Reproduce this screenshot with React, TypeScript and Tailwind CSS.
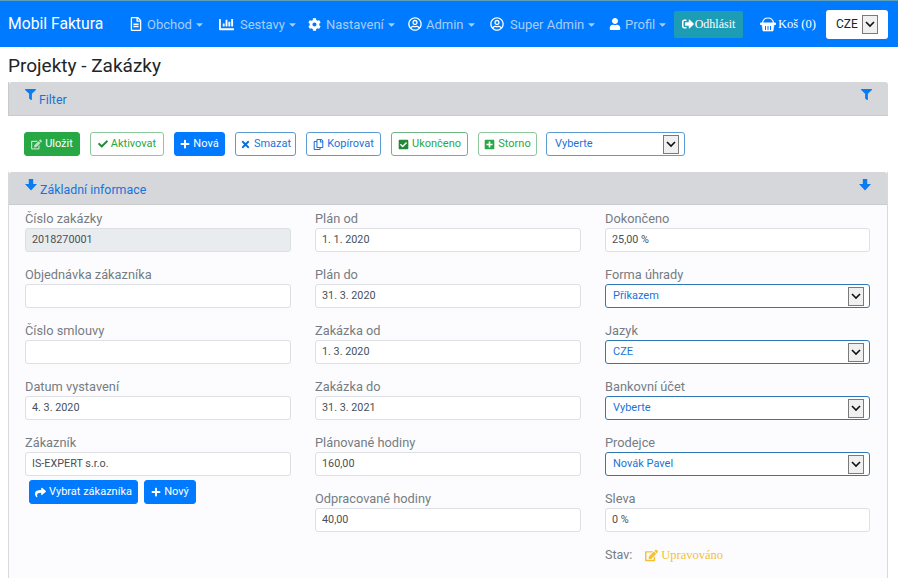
import type { ReactNode } from "react";
import {
  FaCaretDown,
  FaChartBar,
  FaCheck,
  FaCheckSquare,
  FaCog,
  FaEdit,
  FaFilter,
  FaPlus,
  FaPlusSquare,
  FaRegCopy,
  FaRegFileAlt,
  FaRegUserCircle,
  FaShare,
  FaSignOutAlt,
  FaTimes,
  FaUser,
} from "react-icons/fa";

const navItems = [
  { label: "Obchod", icon: <FaRegFileAlt className="text-[14px]" />, box: "w-[18px]", width: "w-[90px]" },
  { label: "Sestavy", icon: <FaChartBar className="text-[15px]" />, box: "w-[21px]", width: "w-[89px]" },
  { label: "Nastavení", icon: <FaCog className="text-[13px]" />, box: "w-[18px]", width: "w-[100px]" },
  { label: "Admin", icon: <FaRegUserCircle className="text-[14px]" />, box: "w-[18px]", width: "w-[82px]" },
  { label: "Super Admin", icon: <FaRegUserCircle className="text-[14px]" />, box: "w-[20px]", width: "w-[119px]" },
  { label: "Profil", icon: <FaUser className="text-[12px]" />, box: "w-[16px]", width: "w-[65px]" },
];

function SelectArrow() {
  return (
    <span className="flex h-[19px] w-[16px] items-center justify-center border border-[#7a7a7a] bg-[#f0f0f0]">
      <svg width="10" height="7" viewBox="0 0 10 7">
        <path d="M1 1l4 4 4-4" fill="none" stroke="#111" strokeWidth="1.6" />
      </svg>
    </span>
  );
}

function BoldArrow({ className }: { className?: string }) {
  return (
    <svg viewBox="0 0 12 12" width="12" height="12" className={className} fill="currentColor">
      <path d="M3.800 0h4.400v5H12L6 11.600 0 5h3.800z" />
    </svg>
  );
}

function Basket() {
  return (
    <svg viewBox="0 0 16 15" width="16" height="15" fill="none" stroke="white">
      <path d="M2.500 6C3 2.500 5 1 8 1s5 1.500 5.500 5" strokeWidth="1.2" />
      <path d="M0.500 6h15v1.500h-15z" fill="white" strokeWidth="1" />
      <path d="M2 8l1 6h10l1-6" fill="white" strokeWidth="0.6" />
      <path d="M5.500 9v4M8 9v4M10.500 9v4" stroke="#007bff" strokeWidth="1" />
    </svg>
  );
}

function Label({ children }: { children: ReactNode }) {
  return <div className="h-[22px] pt-[3px] text-[12.800px] leading-[20px] text-[#767c82]">{children}</div>;
}

function Field({ label, value, disabled }: { label: string; value?: string; disabled?: boolean }) {
  return (
    <div>
      <Label>{label}</Label>
      <div
        className={`flex h-[24px] items-center rounded-[3px] border border-[#dcdfe3] px-[6px] pt-[1px] text-[10.800px] text-[#495057] ${
          disabled ? "bg-[#e9ecef]" : "bg-white"
        }`}
      >
        {value}
      </div>
    </div>
  );
}

function SelectField({ label, value }: { label: string; value: string }) {
  return (
    <div>
      <Label>{label}</Label>
      <div className="flex h-[24px] items-center justify-between rounded-[3px] border border-[#2f78b5] bg-white pl-[7px] pr-[5px] text-[11px] text-[#1a73d9]">
        <span className="pt-[1px]">{value}</span>
        <SelectArrow />
      </div>
    </div>
  );
}

function Btn({ icon, children, className }: { icon: ReactNode; children: ReactNode; className: string }) {
  return (
    <div className={`flex h-[24px] items-center justify-center gap-[3px] whitespace-nowrap rounded-[3px] border text-[11px] ${className}`}>
      {icon}
      <span className="pt-[1px]">{children}</span>
    </div>
  );
}

function BarHeader({ icon, label, height }: { icon: ReactNode; label: string; height: string }) {
  return (
    <div className={`flex ${height} items-start justify-between rounded-t-[3px] border-b border-[#c9cacc] bg-[#d5d7db] px-[16px] pt-[7px] text-[#0a7bf0]`}>
      <div className="flex items-start gap-[3px]">
        <span>{icon}</span>
        <span className="mt-[2px] text-[12.400px] text-[#1a73d9]">{label}</span>
      </div>
      <span>{icon}</span>
    </div>
  );
}

export default function App() {
  return (
    <div className="h-[578px] w-[898px] overflow-hidden bg-white font-['Roboto','Open_Sans',sans-serif]">
      <header className="flex h-[47px] items-center whitespace-nowrap border-t border-[#5f9fb8] bg-[#007bff] pl-[8px]">
        <span className="w-[121px] text-[15.700px] text-white">Mobil Faktura</span>
        {navItems.map((item) => (
          <div key={item.label} className={`flex items-center ${item.width} text-[13px] text-[#a8cdf8]`}>
            <span className={`${item.box} text-white`}>{item.icon}</span>
            <span className="pt-[1px]">{item.label}</span>
            <FaCaretDown className="ml-[2px] text-[11px]" />
          </div>
        ))}
        <div className="flex h-[27px] w-[69px] items-center justify-center gap-[1px] rounded-[2px] bg-[#1c9cb5] font-['Liberation_Serif',serif] text-[12px] text-white">
          <FaSignOutAlt className="text-[12px]" />
          Odhlásit
        </div>
        <div className="ml-[17px] flex items-center gap-[2px] font-['Liberation_Serif',serif] text-[12.500px] text-white">
          <Basket />
          Koš (0)
        </div>
        <div className="ml-[10px] flex h-[29px] w-[62px] items-center justify-end gap-[4px] rounded-[3px] bg-white pr-[10px] text-[12px] text-[#212529]">
          CZE
          <SelectArrow />
        </div>
      </header>

      <main className="pl-[8px] pr-[10px]">
        <h1 className="h-[35px] pt-[7px] text-[19px] leading-[24px] text-[#212529]">Projekty - Zakázky</h1>

        <div className="border-l border-[#c9cacc]">
          <BarHeader icon={<FaFilter className="text-[11px]" />} label="Filter" height="h-[34px]" />
        </div>

        <div className="flex items-center gap-[10px] py-[16px] pl-[16px]">
          <Btn icon={<FaEdit className="text-[11px] text-[#b9e2c3]" />} className="w-[56px] border-[#28a745] bg-[#28a745] text-white">
            Uložit
          </Btn>
          <Btn icon={<FaCheck className="text-[10px] text-[#218838]" />} className="w-[74px] border-[#8cc89b] text-[#28a745]">
            Aktivovat
          </Btn>
          <Btn icon={<FaPlus className="text-[10px]" />} className="w-[51px] border-[#007bff] bg-[#007bff] text-white">
            Nová
          </Btn>
          <Btn icon={<FaTimes className="text-[11px] text-[#0a6fd8]" />} className="w-[61px] border-[#5c9bd1] text-[#1a73d9]">
            Smazat
          </Btn>
          <Btn icon={<FaRegCopy className="text-[11px] text-[#1a73d9]" />} className="w-[75px] border-[#5c9bd1] text-[#1a73d9]">
            Kopírovat
          </Btn>
          <Btn icon={<FaCheckSquare className="text-[11px] text-[#218838]" />} className="w-[77px] border-[#6fb582] text-[#28a745]">
            Ukončeno
          </Btn>
          <Btn icon={<FaPlusSquare className="text-[11px] text-[#28a745]" />} className="w-[59px] border-[#8cc89b] text-[#28a745]">
            Storno
          </Btn>
          <div className="-ml-[1px] flex h-[24px] w-[139px] items-center justify-between rounded-[3px] border border-[#5c9bd1] pl-[8px] pr-[5px] text-[11px] text-[#1a73d9]">
            <span className="pt-[1px]">Vyberte</span>
            <SelectArrow />
          </div>
        </div>

        <section className="h-[406px] border-x border-[#d8d9dc] bg-[#fcfcff]">
          <BarHeader icon={<BoldArrow />} label="Základní informace" height="h-[33px]" />
          <div className="grid grid-cols-[266px_266px_265px] gap-x-[24px] pl-[16px] pt-[1px]">
            <div className="flex flex-col gap-[10px]">
              <Field label="Číslo zakázky" value="2018270001" disabled />
              <Field label="Objednávka zákazníka" />
              <Field label="Číslo smlouvy" />
              <Field label="Datum vystavení" value="4. 3. 2020" />
              <div>
                <Field label="Zákazník" value="IS-EXPERT s.r.o." />
                <div className="mt-[4px] flex gap-[6px] pl-[4px]">
                  <Btn icon={<FaShare className="text-[11px]" />} className="w-[109px] border-[#007bff] bg-[#007bff] text-white">
                    Vybrat zákazníka
                  </Btn>
                  <Btn icon={<FaPlus className="text-[10px]" />} className="w-[52px] border-[#007bff] bg-[#007bff] text-white">
                    Nový
                  </Btn>
                </div>
              </div>
            </div>
            <div className="flex flex-col gap-[10px]">
              <Field label="Plán od" value="1. 1. 2020" />
              <Field label="Plán do" value="31. 3. 2020" />
              <Field label="Zakázka od" value="1. 3. 2020" />
              <Field label="Zakázka do" value="31. 3. 2021" />
              <Field label="Plánované hodiny" value="160,00" />
              <Field label="Odpracované hodiny" value="40,00" />
            </div>
            <div className="flex flex-col gap-[10px]">
              <Field label="Dokončeno" value="25,00 %" />
              <SelectField label="Forma úhrady" value="Příkazem" />
              <SelectField label="Jazyk" value="CZE" />
              <SelectField label="Bankovní účet" value="Vyberte" />
              <SelectField label="Prodejce" value="Novák Pavel" />
              <Field label="Sleva" value="0 %" />
              <div className="mt-[2px] flex h-[22px] items-center text-[12.500px] text-[#767c82]">
                Stav:
                <span className="ml-[13px] flex items-center gap-[3px] font-['Liberation_Serif',serif] text-[12.500px] text-[#f5c033]">
                  <FaEdit className="text-[13px]" />
                  Upravováno
                </span>
              </div>
            </div>
          </div>
        </section>
      </main>
    </div>
  );
}
